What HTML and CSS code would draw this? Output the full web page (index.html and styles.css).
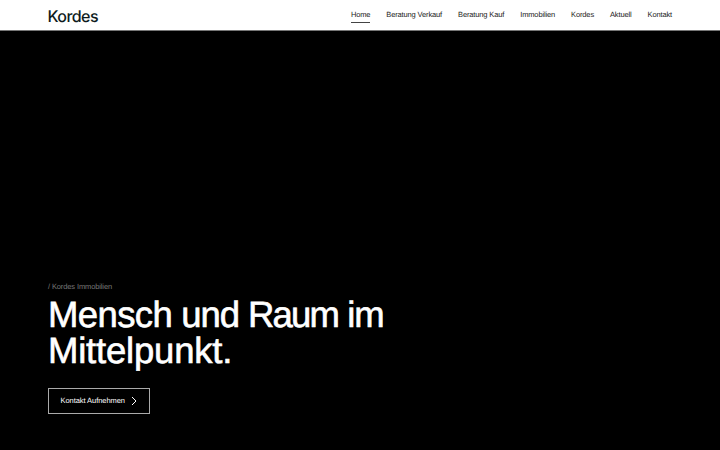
FILE: index.html
```html
<!DOCTYPE html>
<html lang="de">
<head>
<meta charset="utf-8">
<title>Kordes Immobilien</title>
<link rel="stylesheet" href="styles.css">
</head>
<body>
<header class="header">
  <a class="logo">Kordes</a>
  <nav class="nav">
    <a class="active">Home</a>
    <a>Beratung Verkauf</a>
    <a>Beratung Kauf</a>
    <a>Immobilien</a>
    <a>Kordes</a>
    <a>Aktuell</a>
    <a>Kontakt</a>
  </nav>
</header>
<main class="hero">
  <p class="eyebrow">/ Kordes Immobilien</p>
  <h1 class="title"><span class="wide">Mensch</span> und <span class="narrow">Raum</span> im<br><span class="open">Mittelpunkt.</span></h1>
  <a class="button">Kontakt Aufnehmen
    <svg class="chevron" viewBox="0 0 6 10"><path d="M1 1 5 5 1 9"/></svg>
  </a>
</main>
</body>
</html>
```

FILE: styles.css
```css
* { box-sizing: border-box; }
body {
  margin: 0;
  height: 450px;
  display: flex;
  flex-direction: column;
  overflow: hidden;
  background: #000;
  font-family: "Liberation Sans", Arial, sans-serif;
  text-rendering: geometricPrecision;
}
.header {
  height: 31px;
  padding: 0 48px;
  display: flex;
  justify-content: space-between;
  align-items: center;
  background: #fff;
  border-bottom: 1px solid #777;
  color: #222;
}
.logo { font: 500 16px/20px Inter, sans-serif; letter-spacing: -0.55px; padding-top: 2px; margin-left: -0.5px; color: #0d1b20; }
.nav { display: flex; gap: 16px; font-size: 7.5px; line-height: 14px; letter-spacing: -0.14px; }
.nav a { border-bottom: 1px solid transparent; white-space: nowrap; }
.nav .active { border-color: #444; }
.hero {
  flex: 1;
  display: flex;
  flex-direction: column;
  align-items: flex-start;
  justify-content: flex-end;
  padding: 0 48px 36px;
  color: #fff;
}
.eyebrow { margin: 0 0 5px; font-size: 7.5px; line-height: 10px; letter-spacing: -0.12px; color: #777; }
.title {
  margin: 0 0 19px;
  font-size: 36.5px;
  font-weight: 400;
  line-height: 36px;
  letter-spacing: -1.08px;
  -webkit-text-stroke: 0.6px #fff;
}
.wide { letter-spacing: -0.6px; }
.narrow { letter-spacing: -1.8px; }
.open { letter-spacing: -0.2px; }
.button {
  display: flex;
  align-items: center;
  gap: 6px;
  width: 102px;
  height: 26px;
  padding: 0 0 1px 11.5px;
  border: 1px solid #aaa;
  font-size: 7.5px;
  letter-spacing: -0.06px;
}
.chevron { width: 6px; height: 10px; fill: none; stroke: #fff; stroke-width: 1; }
```
